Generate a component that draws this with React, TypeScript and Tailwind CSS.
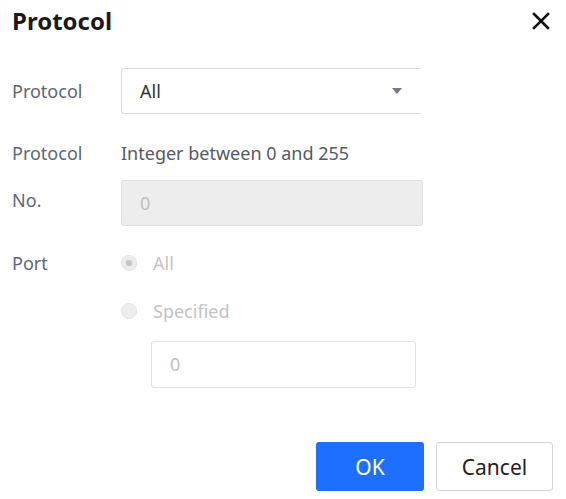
import React from 'react';

const labelCls = 'w-[109px] shrink-0 text-[18px] text-[#606672]';

const Radio: React.FC<{ checked?: boolean; label: string }> = ({ checked, label }) => (
  <div className="flex items-center gap-[16px]">
    <span className="w-[16px] h-[16px] rounded-full bg-[#ececec] border border-[#e2e2e2] flex items-center justify-center">
      {checked && <span className="w-[6px] h-[6px] rounded-full bg-[#c4c4c4]" />}
    </span>
    <span className="text-[18px] text-[#c2c2c2]">{label}</span>
  </div>
);

export default function App() {
  return (
    <div className="w-[566px] h-[499px] bg-white font-['Noto_Sans',sans-serif] overflow-hidden">
      <div className="flex items-center justify-between pl-[12px] pr-[16px] pt-[1px] h-[40px]">
        <h1 className="text-[24px] font-bold text-[#1a1a1a]">Protocol</h1>
        <svg width="18" height="18" viewBox="0 0 18 18" className="mt-[1px]">
          <path d="M2 2 L16 16 M16 2 L2 16" stroke="#111" strokeWidth="2.6" strokeLinecap="square" />
        </svg>
      </div>

      <div className="pl-[12px] pt-[28px]">
        <div className="flex items-center h-[46px]">
          <span className={labelCls}>Protocol</span>
          <div className="w-[300px] h-[46px] border border-r-0 border-[#dcdcdc] rounded-l-[3px] flex items-center justify-between pl-[18px] pr-[19px]">
            <span className="text-[18px] text-[#333]">All</span>
            <svg width="10" height="6" viewBox="0 0 10 6">
              <path d="M0 0 L10 0 L5 6 Z" fill="#737985" />
            </svg>
          </div>
        </div>

        <div className="flex items-center h-[30px] mt-[24px]">
          <span className={labelCls}>Protocol</span>
          <span className="text-[18px] text-[#555a62]">Integer between 0 and 255</span>
        </div>

        <div className="flex items-start mt-[12px]">
          <span className={`${labelCls} pt-[7px]`}>No.</span>
          <div className="w-[302px] h-[46px] bg-[#ededed] border border-[#dedede] rounded-[3px] flex items-center pl-[18px]">
            <span className="text-[18px] text-[#c0c0c0]">0</span>
          </div>
        </div>

        <div className="flex items-start mt-[24px]">
          <span className={labelCls}>Port</span>
          <div className="flex flex-col">
            <div className="h-[26px] flex items-center">
              <Radio checked label="All" />
            </div>
            <div className="h-[26px] flex items-center mt-[22px]">
              <Radio label="Specified" />
            </div>
            <div className="ml-[30px] mt-[17px] w-[265px] h-[47px] bg-white border border-[#e0e0e0] rounded-[3px] flex items-center pl-[18px]">
              <span className="text-[18px] text-[#c0c0c0]">0</span>
            </div>
          </div>
        </div>
      </div>

      <div className="flex justify-end gap-[12px] pr-[13px] mt-[54px]">
        <button className="w-[108px] h-[49px] pt-[3px] rounded-[3px] bg-[#1f6fff] text-white text-[21px]">OK</button>
        <button className="w-[117px] h-[49px] pt-[3px] rounded-[3px] bg-white border border-[#d4d4d4] text-[#222] text-[21px]">Cancel</button>
      </div>
    </div>
  );
}
